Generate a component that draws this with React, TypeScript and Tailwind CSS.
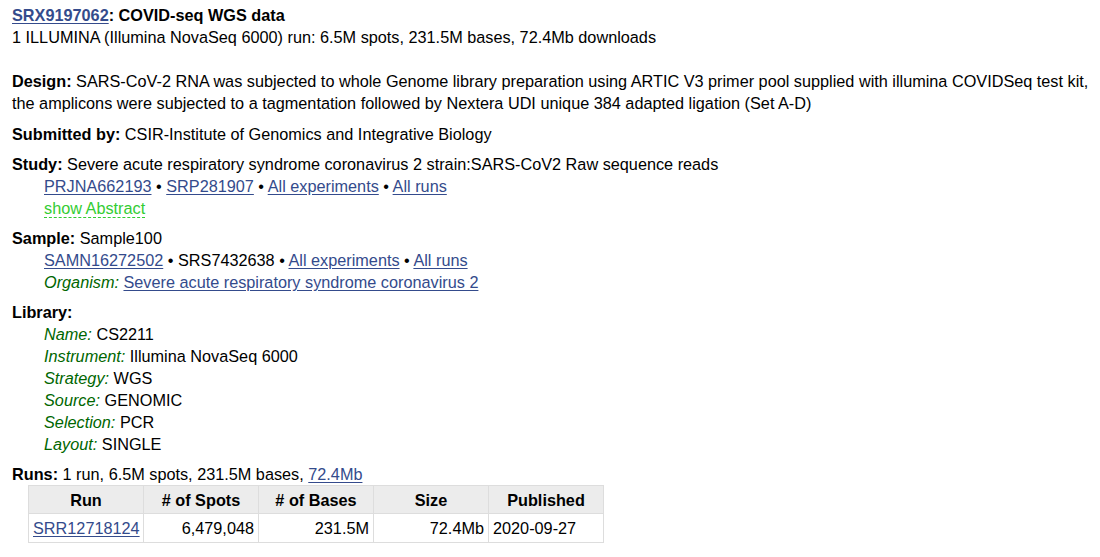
function Link({ children }: { children: React.ReactNode }) {
  return (
    <a href="#" className="text-[#344b8c] underline underline-offset-2">
      {children}
    </a>
  );
}

function Field({ name, children }: { name: string; children: React.ReactNode }) {
  return (
    <div>
      <span className="italic text-[#006600]">{name}:</span> {children}
    </div>
  );
}

const runs = [
  { acc: "SRR12718124", spots: "6,479,048", bases: "231.5M", size: "72.4Mb", published: "2020-09-27" },
];

export default function App() {
  return (
    <div className="bg-white text-black pl-3 pr-1 pt-[4px] text-[16.25px] leading-[22px] font-['Liberation_Sans',Arial,sans-serif]">
      {/* Title */}
      <div className="font-bold">
        <Link>SRX9197062</Link>: COVID-seq WGS data
      </div>
      <div>1 ILLUMINA (Illumina NovaSeq 6000) run: 6.5M spots, 231.5M bases, 72.4Mb downloads</div>

      {/* Design */}
      <div className="mt-[22px]">
        <b>Design:</b> SARS-CoV-2 RNA was subjected to whole Genome library preparation using ARTIC V3 primer pool
        supplied with illumina COVIDSeq test kit, the amplicons were subjected to a tagmentation followed by Nextera UDI
        unique 384 adapted ligation (Set A-D)
      </div>

      <div className="mt-[9px]">
        <b>Submitted by:</b> CSIR-Institute of Genomics and Integrative Biology
      </div>

      {/* Study */}
      <div className="mt-2">
        <div>
          <b>Study:</b> Severe acute respiratory syndrome coronavirus 2 strain:SARS-CoV2 Raw sequence reads
        </div>
        <div className="pl-8">
          <div>
            <Link>PRJNA662193</Link> • <Link>SRP281907</Link> • <Link>All experiments</Link> • <Link>All runs</Link>
          </div>
          <div>
            <span className="text-[#33cc33] border-b border-dashed border-[#33cc33] cursor-pointer">show Abstract</span>
          </div>
        </div>
      </div>

      {/* Sample */}
      <div className="mt-2">
        <div>
          <b>Sample:</b> Sample100
        </div>
        <div className="pl-8">
          <div>
            <Link>SAMN16272502</Link> • SRS7432638 • <Link>All experiments</Link> • <Link>All runs</Link>
          </div>
          <Field name="Organism">
            <Link>Severe acute respiratory syndrome coronavirus 2</Link>
          </Field>
        </div>
      </div>

      {/* Library */}
      <div className="mt-2">
        <div>
          <b>Library:</b>
        </div>
        <div className="pl-8">
          <Field name="Name">CS2211</Field>
          <Field name="Instrument">Illumina NovaSeq 6000</Field>
          <Field name="Strategy">WGS</Field>
          <Field name="Source">GENOMIC</Field>
          <Field name="Selection">PCR</Field>
          <Field name="Layout">SINGLE</Field>
        </div>
      </div>

      {/* Runs */}
      <div className="mt-2">
        <div>
          <b>Runs:</b> 1 run, 6.5M spots, 231.5M bases, <Link>72.4Mb</Link>
        </div>
        <table className="ml-4 border-collapse table-fixed w-[576px]">
          <thead>
            <tr className="bg-[#ececec]">
              {["Run", "# of Spots", "# of Bases", "Size", "Published"].map((h) => (
                <th key={h} className="h-[28px] border border-[#dddddd] px-1 font-bold text-center">
                  {h}
                </th>
              ))}
            </tr>
          </thead>
          <tbody>
            {runs.map((r) => (
              <tr key={r.acc}>
                <td className="h-[29px] border border-[#dddddd] pl-1 pr-0 whitespace-nowrap">
                  <Link>{r.acc}</Link>
                </td>
                <td className="border border-[#dddddd] px-1 text-right">{r.spots}</td>
                <td className="border border-[#dddddd] px-1 text-right">{r.bases}</td>
                <td className="border border-[#dddddd] px-1 text-right">{r.size}</td>
                <td className="border border-[#dddddd] px-1">{r.published}</td>
              </tr>
            ))}
          </tbody>
        </table>
      </div>
    </div>
  );
}
